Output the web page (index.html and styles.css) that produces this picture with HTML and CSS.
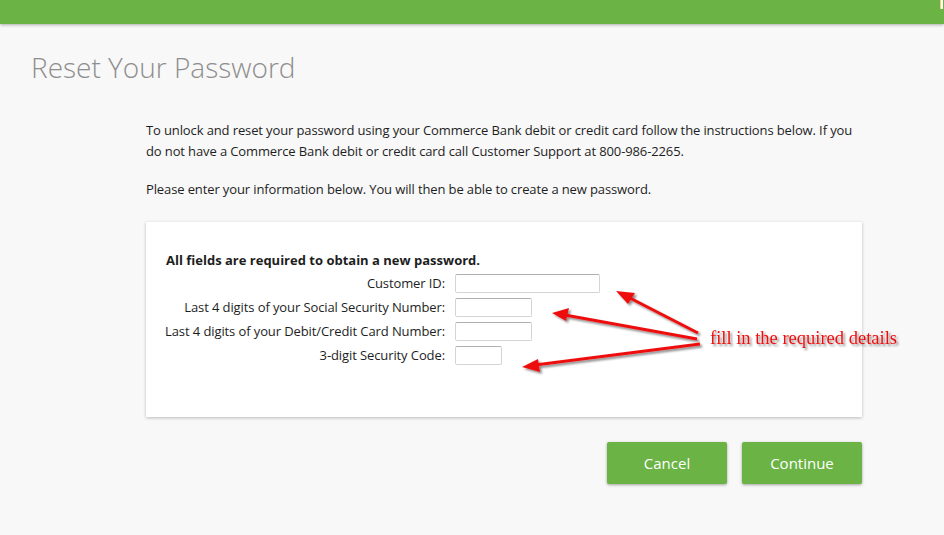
FILE: index.html
```html
<!DOCTYPE html>
<html>
<head>
<meta charset="utf-8">
<link rel="stylesheet" href="styles.css">
</head>
<body>
<div class="topbar"><span class="corner"></span></div>
<h1 class="title">Reset Your Password</h1>
<main class="content">
  <p class="intro">To unlock and reset your password using your Commerce Bank debit or credit card follow the instructions below. If you do not have a Commerce Bank debit or credit card call Customer Support at 800-986-2265.</p>
  <p class="intro">Please enter your information below. You will then be able to create a new password.</p>
  <section class="card">
    <h2 class="card-head">All fields are required to obtain a new password.</h2>
    <div class="form-grid">
      <label class="lbl">Customer ID:</label><input class="inp w-long" type="text">
      <label class="lbl">Last 4 digits of your Social Security Number:</label><input class="inp w-mid" type="text">
      <label class="lbl">Last 4 digits of your Debit/Credit Card Number:</label><input class="inp w-mid" type="text">
      <label class="lbl">3-digit Security Code:</label><input class="inp w-short" type="text">
    </div>
  </section>
  <div class="actions">
    <button class="btn">Cancel</button>
    <button class="btn">Continue</button>
  </div>
</main>
<svg class="annot" width="944" height="535" viewBox="0 0 944 535">
  <defs>
    <filter id="sh" x="-10%" y="-10%" width="130%" height="130%">
      <feDropShadow dx="2" dy="2" stdDeviation="1.2" flood-color="#000" flood-opacity="0.45"/>
    </filter>
  </defs>
  <g filter="url(#sh)" fill="#ee1111" stroke="#ee1111">
    <line x1="698" y1="333" x2="628" y2="297" stroke-width="3"/>
    <polygon points="616,291 635,293 628,304" stroke="none"/>
    <line x1="697" y1="339" x2="565" y2="315" stroke-width="3"/>
    <polygon points="552,313 569,308 566,321" stroke="none"/>
    <line x1="700" y1="344" x2="535" y2="365" stroke-width="3"/>
    <polygon points="522,367 538,359 540,372" stroke="none"/>
    <text x="710" y="344" class="annot-text" stroke="none">fill in the required details</text>
  </g>
</svg>
</body>
</html>
```

FILE: styles.css
```css
html, body {
  margin: 0;
  padding: 0;
}
body {
  background: #f8f8f8;
  font-family: "Open Sans", "Liberation Sans", sans-serif;
  color: #1e1e1e;
  width: 944px;
  height: 535px;
  overflow: hidden;
  position: relative;
}
.topbar {
  height: 24px;
  background: #6ab344;
  box-shadow: 0 1px 3px rgba(0,0,0,0.3);
  position: relative;
}
.corner {
  position: absolute;
  right: 1px;
  top: 0;
  width: 2px;
  height: 9px;
  border-left: 1px solid #f3d36b;
  background: #fff;
}
.title {
  margin: 0;
  padding: 24px 0 0 31px;
  font-size: 28px;
  font-weight: 300;
  color: #8e8e8e;
  line-height: 38px;
}
.content {
  margin: 0 0 0 146px;
  width: 716px;
  padding-top: 34px;
}
.intro {
  margin: 0 0 17px;
  font-size: 13px;
  line-height: 21px;
  letter-spacing: -0.12px;
}
.card {
  margin-top: 22px;
  background: #fff;
  box-shadow: 0 1px 3px rgba(0,0,0,0.25);
  padding: 28px 20px 50px;
  height: 195px;
  box-sizing: border-box;
}
.card-head {
  margin: 0 0 4px;
  font-size: 13px;
  font-weight: 700;
  line-height: 20px;
}
.form-grid {
  display: grid;
  grid-template-columns: 279px auto;
  column-gap: 10px;
  row-gap: 5px;
  align-items: center;
  justify-items: start;
}
.lbl {
  justify-self: end;
  font-size: 13px;
  line-height: 19px;
  white-space: nowrap;
  letter-spacing: -0.1px;
}
.inp {
  box-sizing: border-box;
  height: 19px;
  margin: 0;
  padding: 0 3px;
  border: 1px solid #d4d4d8;
  border-top-color: #b0b0b4;
  border-radius: 2px;
  background: #fff;
}
.w-long { width: 145px; }
.w-mid { width: 77px; }
.w-short { width: 47px; }
.actions {
  display: flex;
  justify-content: flex-end;
  gap: 15px;
  margin-top: 25px;
}
.btn {
  width: 120px;
  height: 42px;
  border: none;
  border-radius: 2px;
  background: #6ab344;
  color: #fff;
  font-family: "Open Sans", "Liberation Sans", sans-serif;
  font-size: 15px;
  box-shadow: 0 1px 3px rgba(0,0,0,0.35);
}
.annot {
  position: absolute;
  left: 0;
  top: 0;
  pointer-events: none;
}
.annot-text {
  font-family: "Liberation Serif", serif;
  font-size: 18.5px;
}
```
